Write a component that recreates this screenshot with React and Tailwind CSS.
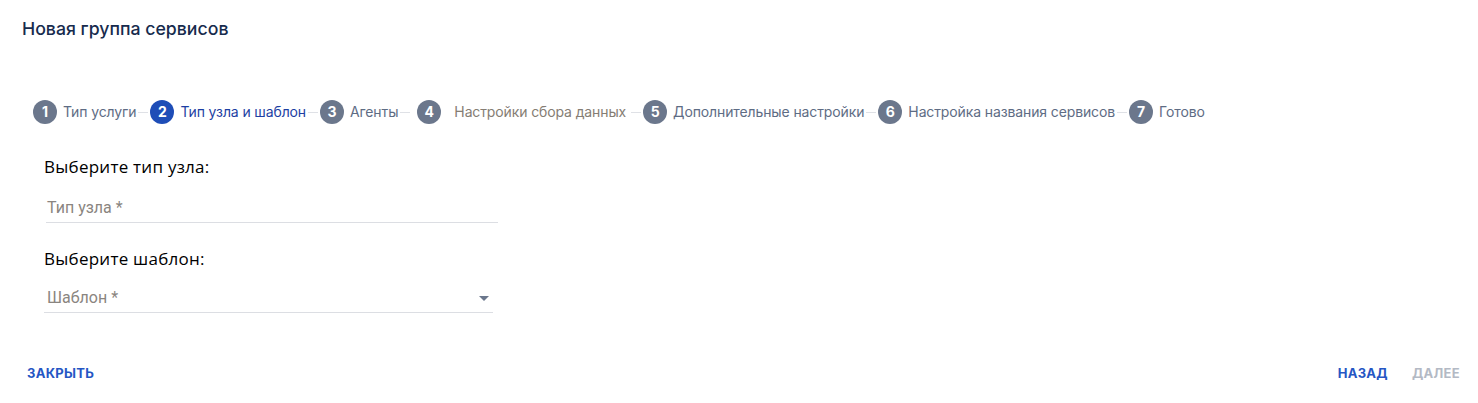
import React from "react";

const steps = [
  { n: 1, label: "Тип услуги" },
  { n: 2, label: "Тип узла и шаблон", active: true },
  { n: 3, label: "Агенты" },
  { n: 4, label: "Настройки сбора данных", odd: true },
  { n: 5, label: "Дополнительные настройки" },
  { n: 6, label: "Настройка названия сервисов" },
  { n: 7, label: "Готово" },
];

function Step({ step, last }) {
  return (
    <div className="flex items-center">
      <div
        className={
          step.active
            ? "flex h-6 w-6 items-center justify-center rounded-full bg-[#1e4db7] text-[14px] font-bold leading-none text-white"
            : step.odd
            ? "ml-[5px] flex h-6 w-6 items-center justify-center rounded-full bg-[#6b778c] text-[14px] font-bold leading-none text-white"
            : "flex h-6 w-6 items-center justify-center rounded-full bg-[#6b778c] text-[14px] font-bold leading-none text-white"
        }
      >
        {step.n}
      </div>
      <span
        className={
          step.active
            ? "ml-[6px] text-[14px] leading-5 tracking-[-0.12px] text-[#1d3fa3]"
            : step.odd
            ? "ml-[13px] mr-[3px] text-[14px] leading-5 tracking-[-0.12px] text-[#857d74]"
            : "ml-[6px] text-[14px] leading-5 tracking-[-0.12px] text-[#5e6c84]"
        }
      >
        {step.label}
      </span>
      {!last && <div className="mx-[2px] h-px w-[10px] bg-[#dfe1e6]" />}
    </div>
  );
}

export default function App() {
  return (
    <div className="flex h-[403px] w-full flex-col bg-white font-['Inter',sans-serif]">
      <div className="pl-[22px] pt-[17px] text-[17.7px] font-medium leading-6 text-[#172b4d]">
        Новая группа сервисов
      </div>

      <div className="mt-[59px] flex items-center pl-[33px]">
        {steps.map((s, i) => (
          <Step key={s.n} step={s} last={i === steps.length - 1} />
        ))}
      </div>

      <div className="mt-[31px] flex flex-col pl-[44px]">
        <div className="font-['Open_Sans',sans-serif] text-[17px] leading-6 tracking-[0.25px] text-black">
          Выберите тип узла:
        </div>
        <div className="ml-[2px] mt-[19px] w-[452px] border-b border-[#dcdee3] pb-[4px] pl-px font-['Roboto',sans-serif] text-[16px] leading-5 text-[#8a8580]">
          Тип узла *
        </div>

        <div className="mt-[24px] font-['Open_Sans',sans-serif] text-[17px] leading-6 tracking-[0.25px] text-black">
          Выберите шаблон:
        </div>
        <div className="mt-[17px] flex w-[449px] items-center justify-between border-b border-[#dcdee3] pb-[4px] font-['Roboto',sans-serif] text-[16px] leading-5 text-[#8a8580]">
          <span className="pl-[3px]">Шаблон *</span>
          <svg width="10" height="5" viewBox="0 0 10 5" className="mr-[4px]">
            <path d="M0 0 L10 0 L5 5 Z" fill="#6b778c" />
          </svg>
        </div>
      </div>

      <div className="mt-[50px] flex items-center justify-between pl-[27px] pr-[18px]">
        <button className="text-[13px] font-bold leading-5 tracking-[0.3px] text-[#2556c4]">
          ЗАКРЫТЬ
        </button>
        <div className="flex items-center gap-6">
          <button className="text-[13px] font-bold leading-5 tracking-[0.3px] text-[#2556c4]">
            НАЗАД
          </button>
          <button className="text-[13px] font-bold leading-5 tracking-[0.3px] text-[#b3b9c4]">
            ДАЛЕЕ
          </button>
        </div>
      </div>
    </div>
  );
}
